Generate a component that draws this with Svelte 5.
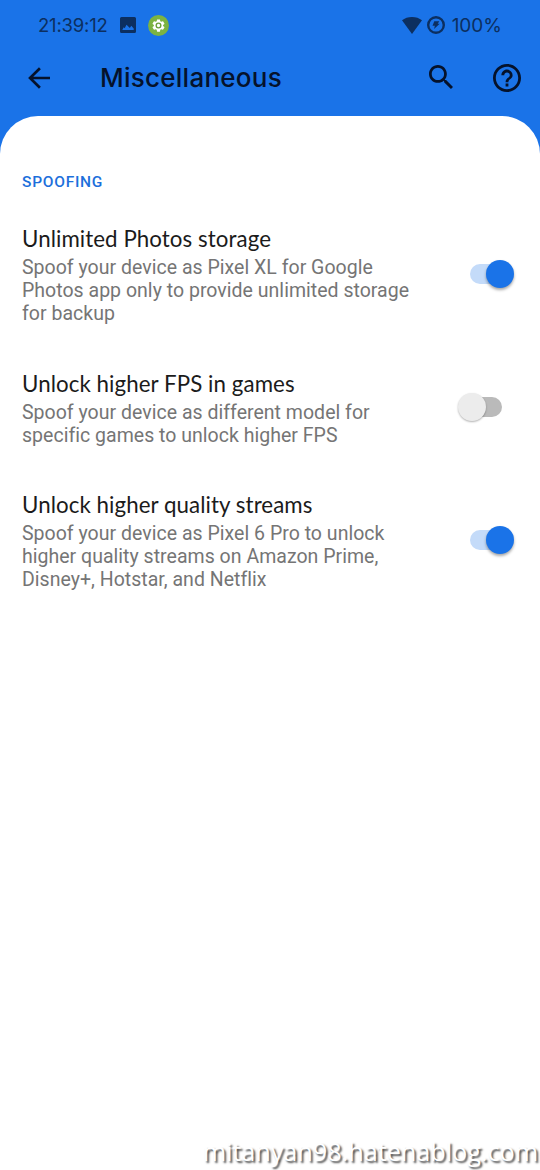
<script>
  let items = $state([
    {
      title: "Unlimited Photos storage",
      lines: [
        "Spoof your device as Pixel XL for Google",
        "Photos app only to provide unlimited storage",
        "for backup",
      ],
      enabled: true,
    },
    {
      title: "Unlock higher FPS in games",
      lines: [
        "Spoof your device as different model for",
        "specific games to unlock higher FPS",
      ],
      enabled: false,
    },
    {
      title: "Unlock higher quality streams",
      lines: [
        "Spoof your device as Pixel 6 Pro to unlock",
        "higher quality streams on Amazon Prime,",
        "Disney+, Hotstar, and Netflix",
      ],
      enabled: true,
    },
  ]);

  function toggle(item) {
    item.enabled = !item.enabled;
  }
</script>

<div class="screen">
  <header>
    <div class="status-bar">
      <span class="clock">21:39:12</span>
      <svg class="photo-icon" viewBox="0 0 16 16">
        <path
          fill-rule="evenodd"
          d="M1.500 0h13A1.500 1.500 0 0 1 16 1.500v13a1.500 1.500 0 0 1-1.500 1.500h-13A1.500 1.500 0 0 1 0 14.500V1.500A1.500 1.500 0 0 1 1.500 0zM2.300 13h11.400v-1.500L11.300 8.800 9.800 11 6.500 7.800 4.700 11.300 3.700 10.300z"
        />
      </svg>
      <svg class="gear-icon" viewBox="0 0 24 24">
        <circle cx="12" cy="12" r="12" fill="#7cb342" />
        <g transform="translate(3.600 3.600) scale(.7)">
          <path
            fill="#fff"
            d="M19.430 12.980c.04-.32.070-.64.070-.98s-.03-.66-.07-.98l2.110-1.650c.19-.15.24-.42.120-.64l-2-3.460c-.12-.22-.39-.3-.61-.22l-2.490 1c-.52-.4-1.080-.73-1.690-.98l-.38-2.650C14.460 2.180 14.250 2 14 2h-4c-.25 0-.46.18-.49.420l-.38 2.650c-.61.25-1.170.59-1.690.98l-2.490-1c-.23-.09-.49 0-.61.220l-2 3.460c-.13.22-.07.49.120.640l2.110 1.650c-.04.32-.07.65-.07.980s.03.660.070.980l-2.110 1.650c-.19.15-.24.42-.12.640l2 3.460c.12.22.39.300.610.220l2.490-1c.52.40 1.080.730 1.690.980l.38 2.650c.03.24.24.420.490.420h4c.25 0 .46-.18.490-.42l.38-2.650c.61-.25 1.170-.59 1.690-.98l2.490 1c.23.090.490 0 .610-.22l2-3.460c.12-.22.070-.49-.12-.64z"
          />
          <circle cx="12" cy="12" r="3.800" fill="#fff" stroke="#689f38" stroke-width="2.200" />
        </g>
      </svg>
      <div class="status-right">
        <svg class="wifi-icon" viewBox="0 0 20 17">
          <path d="M0 3.300C2.700 1.200 6.100 0 10 0s7.300 1.200 10 3.300L10 17z" />
        </svg>
        <svg class="battery-icon" viewBox="0 0 18 18">
          <circle cx="9" cy="9" r="7.800" fill="none" stroke="currentColor" stroke-width="2.400" />
          <path d="M7.300 5.300h5L10.700 7.800h2l-5.700 5.200.9-3.300H5.500z" />
        </svg>
        <span class="percent">100%</span>
      </div>
    </div>
    <div class="toolbar">
      <button class="back" aria-label="Back">
        <svg viewBox="0 0 24 24" width="22" height="22">
          <path
            d="M13 1.300 2.200 12 13 22.700M2.200 12H24"
            fill="none"
            stroke="currentColor"
            stroke-width="2.900"
          />
        </svg>
      </button>
      <h1>Miscellaneous</h1>
      <button class="search" aria-label="Search">
        <svg viewBox="3 3 17.500 17.500" width="24" height="24">
          <path
            d="M15.500 14h-.79l-.28-.27C15.410 12.590 16 11.110 16 9.500 16 5.910 13.090 3 9.500 3S3 5.910 3 9.500 5.910 16 9.500 16c1.610 0 3.090-.59 4.230-1.570l.27.280v.790l5 4.990L20.490 19l-4.990-5zm-6 0C7.010 14 5 11.990 5 9.500S7.010 5 9.500 5 14 7.010 14 9.500 11.990 14 9.500 14z"
          />
        </svg>
      </button>
      <button class="help" aria-label="Help">
        <svg viewBox="2 2 20 20" width="28" height="28">
          <path
            d="M11 18h2v-2h-2v2zm1-16C6.480 2 2 6.480 2 12s4.480 10 10 10 10-4.480 10-10S17.520 2 12 2zm0 18c-4.410 0-8-3.590-8-8s3.590-8 8-8 8 3.590 8 8-3.590 8-8 8zm0-14c-2.210 0-4 1.790-4 4h2c0-1.100.9-2 2-2s2 .9 2 2c0 2-3 1.750-3 5h2c0-2.250 3-2.500 3-5 0-2.210-1.790-4-4-4z"
          />
        </svg>
      </button>
    </div>
  </header>

  <main>
    <h2>SPOOFING</h2>
    {#each items as item (item.title)}
      <div class="item">
        <div class="item-text">
          <h3>{item.title}</h3>
          {#each item.lines as line}
            <p>{line}</p>
          {/each}
        </div>
        <button
          class="switch"
          class:on={item.enabled}
          role="switch"
          aria-checked={item.enabled}
          aria-label={item.title}
          onclick={() => toggle(item)}
        >
          <span class="thumb"></span>
        </button>
      </div>
    {/each}
    <footer>mitanyan98.hatenablog.com</footer>
  </main>
</div>

<style>
  :global(body) {
    margin: 0;
  }

  .screen {
    display: flex;
    flex-direction: column;
    width: 540px;
    height: 1170px;
    background: #1a73e8;
    font-family: Roboto, sans-serif;
    overflow: hidden;
  }

  header {
    height: 116px;
    flex-shrink: 0;
  }

  h1,
  h2,
  h3,
  p {
    margin: 0;
    white-space: nowrap;
  }

  svg {
    display: block;
    fill: currentColor;
    flex-shrink: 0;
  }

  button {
    display: block;
    padding: 0;
    border: none;
    background: none;
    color: inherit;
    cursor: pointer;
  }

  .status-bar {
    display: flex;
    align-items: center;
    height: 50px;
    padding: 0 38px;
    box-sizing: border-box;
    color: #0c2f60;
    font-family: Inter, sans-serif;
    font-size: 18.5px;
  }

  .clock {
    width: 82px;
    letter-spacing: -0.2px;
  }

  .percent {
    font-size: 19px;
  }

  .photo-icon {
    width: 16px;
    height: 16px;
  }

  .gear-icon {
    width: 21px;
    height: 21px;
    margin-left: 12px;
  }

  .status-right {
    display: flex;
    align-items: center;
    margin-left: auto;
  }

  .wifi-icon {
    width: 20px;
    height: 17px;
  }

  .battery-icon {
    width: 18px;
    height: 18px;
    margin: 0 7px 0 5px;
  }

  .toolbar {
    display: flex;
    align-items: center;
    height: 55px;
    padding: 0 19px 0 28px;
    color: #05122b;
  }

  h1 {
    margin-left: 50px;
    font-family: Inter, sans-serif;
    font-size: 26px;
    font-weight: 500;
    line-height: 32px;
    letter-spacing: 0.25px;
  }

  .search {
    margin: 0 0 1px auto;
  }

  .help {
    margin-left: 40px;
  }

  main {
    display: flex;
    flex-direction: column;
    flex: 1;
    background: #fff;
    border-radius: 38px 38px 0 0;
  }

  h2 {
    height: 30px;
    padding: 56px 22px 0;
    color: #1c6fdb;
    font-size: 15.5px;
    font-weight: 500;
    line-height: 20px;
    letter-spacing: 0.75px;
  }

  .item {
    display: flex;
    align-items: center;
    justify-content: space-between;
    padding: 23px 26px 21.5px 22px;
  }

  h3 {
    height: 31px;
    color: #1b1b1b;
    font-family: Lato, sans-serif;
    font-size: 22.3px;
    font-weight: 400;
    line-height: 28px;
    letter-spacing: 0.07px;
  }

  p {
    color: #757575;
    font-size: 19.5px;
    line-height: 23px;
    letter-spacing: 0.02px;
  }

  .switch {
    display: flex;
    align-items: center;
    position: relative;
    width: 56px;
    height: 28px;
    margin-bottom: 2px;
  }

  .switch::before {
    content: "";
    position: absolute;
    left: 12px;
    top: 4px;
    width: 32px;
    height: 20px;
    border-radius: 10px;
    background: #bababa;
  }

  .switch.on::before {
    background: #c4dbf9;
  }

  .thumb {
    position: relative;
    width: 28px;
    height: 28px;
    border-radius: 50%;
    background: #ececec;
    box-shadow: 0 1px 2px rgba(0, 0, 0, 0.3);
  }

  .on .thumb {
    margin-left: auto;
    background: #1a73e8;
    box-shadow: 0 2px 3px rgba(0, 0, 0, 0.35);
  }

  footer {
    margin-top: auto;
    padding: 0 2px 2px 0;
    color: #fff;
    font-family: "Open Sans", sans-serif;
    font-size: 25.2px;
    line-height: 34px;
    text-align: right;
    text-shadow: 2px 2px 2px rgba(0, 0, 0, 0.7);
  }
</style>
